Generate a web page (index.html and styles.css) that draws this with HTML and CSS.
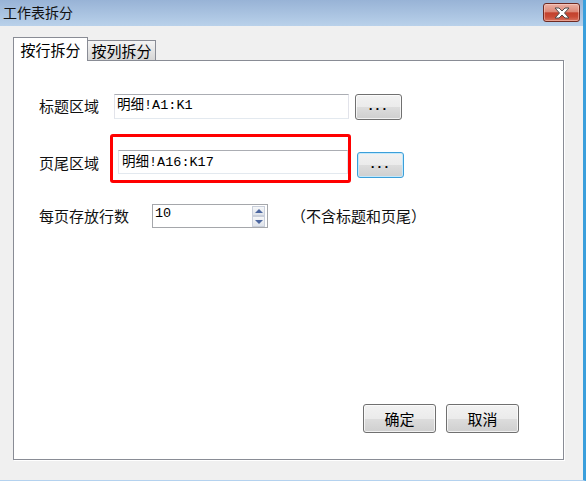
FILE: index.html
```html
<!DOCTYPE html>
<html lang="zh-CN">
<head>
<meta charset="utf-8">
<title>工作表拆分</title>
<link rel="stylesheet" href="styles.css">
</head>
<body>
<div class="window">
  <div class="titlebar">
    <span class="title">工作表拆分</span>
    <div class="close">
      <svg width="16" height="12" viewBox="-1 -1 16 12" aria-hidden="true">
        <polygon points="0,0 4,0 7,3 10,0 14,0 9.5,5 14,10 10,10 7,7 4,10 0,10 4.5,5" fill="#fff" stroke="#4d4d4d" stroke-width="1" stroke-linejoin="round"/>
      </svg>
    </div>
  </div>
  <div class="client">
    <div class="tabs">
      <div class="tab active">按行拆分</div>
      <div class="tab">按列拆分</div>
    </div>
    <div class="panel">
      <div class="row row1">
        <span class="label l1">标题区域</span>
        <div class="field f1">明细!A1:K1</div>
        <div class="btn dots">...</div>
      </div>
      <div class="row row2">
        <span class="label l2">页尾区域</span>
        <div class="redbox"><div class="field f2">明细!A16:K17</div></div>
        <div class="btn dots focus">...</div>
      </div>
      <div class="row row3">
        <span class="label l3">每页存放行数</span>
        <div class="spin">
          <span class="spin-val">10</span>
          <div class="spin-btns"><span class="sb up"></span><span class="sb down"></span></div>
        </div>
        <span class="note">（不含标题和页尾）</span>
      </div>
      <div class="actions">
        <div class="btn action">确定</div>
        <div class="btn action">取消</div>
      </div>
    </div>
  </div>
</div>
</body>
</html>
```

FILE: styles.css
```css
* { box-sizing: border-box; }
html, body { margin: 0; padding: 0; }
body {
  width: 586px;
  height: 481px;
  overflow: hidden;
  font-family: "Noto Sans CJK SC", "Noto Sans", sans-serif;
  color: #000;
  background: #f0f0f0;
}
.window {
  width: 586px;
  height: 481px;
  background: #f0f0f0;
  border-right: 3px solid #3a9fdc;
  border-bottom: 1px solid #b4d2ef;
  display: flex;
  flex-direction: column;
}
.titlebar {
  height: 26px;
  flex: none;
  display: flex;
  justify-content: space-between;
  align-items: flex-start;
  padding: 0 3px 0 3px;
  background: linear-gradient(#98b3d6, #b9d1ea);
}
.title {
  font-size: 14px;
  line-height: 24px;
  color: #111;
}
.close {
  margin-top: 3px;
  width: 37px;
  height: 19px;
  border: 1px solid #6e2a22;
  border-radius: 3px;
  background: linear-gradient(#ebb1a5 0%, #dc8877 46%, #c3412d 52%, #c94b36 75%, #d9735f 100%);
  box-shadow: inset 0 0 0 1px rgba(255, 220, 210, 0.45);
  display: flex;
  align-items: center;
  justify-content: center;
}
.client {
  padding: 11px 0 0 13px;
  display: flex;
  flex-direction: column;
}
.tabs {
  display: flex;
  align-items: flex-end;
  height: 23px;
}
.tab {
  font-size: 15px;
  line-height: 18px;
  display: flex;
  align-items: center;
  justify-content: center;
  height: 20px;
  width: 68px;
  border-top: 1px solid #898c95;
  border-right: 1px solid #898c95;
  background: linear-gradient(#f4f4f4, #d6d6d6);
}
.tab.active {
  position: relative;
  z-index: 1;
  width: 75px;
  height: 24px;
  margin-bottom: -1px;
  border: 1px solid #898c95;
  border-bottom: none;
  background: #fff;
}
.panel {
  width: 551px;
  height: 400px;
  border: 1px solid #898c95;
  box-shadow: 1px 1px 0 #fff;
  background: #fff;
  display: flex;
  flex-direction: column;
  padding: 0 44px 26px 25px;
}
.row {
  display: flex;
  align-items: flex-start;
}
.row1 { margin-top: 33px; }
.row2 { margin-top: 14px; }
.row3 { margin-top: 21px; }
.label {
  font-size: 15px;
  line-height: 20px;
  color: #111;
  white-space: nowrap;
}
.l1 { width: 75px; margin-top: 2px; }
.l2 { width: 71px; margin-top: 19px; }
.l3 { width: 113px; margin-top: 2px; }
.field {
  font-family: "Liberation Mono", "Noto Sans CJK SC", monospace;
  font-size: 13.5px;
  line-height: 18px;
  padding-left: 2px;
  background: #fff;
  border: 1px solid #e2e3ea;
  border-top-color: #abadb3;
  border-bottom-color: #e3e9ef;
  white-space: nowrap;
}
.f1 { width: 235px; height: 25px; padding-top: 2px; }
.f2 { width: 230px; height: 24px; padding-top: 3px; padding-left: 3px; }
.redbox {
  width: 241px;
  height: 49px;
  border: 3px solid #ff0000;
  border-radius: 3px;
  padding: 13px 0 0 5px;
}
.btn {
  border: 1px solid #707070;
  border-radius: 3px;
  background: linear-gradient(#f2f2f2 0%, #ebebeb 50%, #dddddd 50%, #cfcfcf 100%);
  box-shadow: inset 0 0 0 1px rgba(255, 255, 255, 0.7);
  display: flex;
  align-items: center;
  justify-content: center;
}
.dots {
  width: 47px;
  height: 26px;
  margin-left: 6px;
  padding-right: 3px;
  font-family: "Liberation Mono", monospace;
  font-weight: bold;
  font-size: 13px;
  letter-spacing: -1px;
  line-height: 14px;
}
.dots.focus {
  margin-top: 18px;
  border-color: #3c9fd9;
  box-shadow: inset 0 0 0 1px #c3e8fb;
}
.spin {
  width: 116px;
  height: 24px;
  border: 1px solid #a5a7ab;
  background: #fff;
  display: flex;
  align-items: flex-start;
}
.spin-val {
  flex: 1;
  font-family: "Liberation Mono", monospace;
  font-size: 13.5px;
  line-height: 16px;
  padding: 1px 0 0 2px;
}
.spin-btns {
  width: 13px;
  margin: 1px 2px 0 0;
  display: flex;
  flex-direction: column;
}
.sb {
  height: 10px;
  border: 1px solid #c9cfdb;
  background: linear-gradient(#f6f7f9, #dfe3ea);
  display: flex;
  align-items: center;
  justify-content: center;
}
.sb.down { height: 11px; }
.sb.up::after {
  content: "";
  border-left: 4px solid transparent;
  border-right: 4px solid transparent;
  border-bottom: 4px solid #4b66a0;
}
.sb.down::after {
  content: "";
  border-left: 4px solid transparent;
  border-right: 4px solid transparent;
  border-top: 4px solid #4b66a0;
}
.note {
  font-size: 15px;
  line-height: 20px;
  margin-left: 23px;
  margin-top: 2px;
  color: #111;
  white-space: nowrap;
}
.actions {
  margin-top: auto;
  display: flex;
  justify-content: flex-end;
  gap: 10px;
}
.action {
  width: 73px;
  height: 29px;
  font-size: 15px;
  line-height: 20px;
}
```
